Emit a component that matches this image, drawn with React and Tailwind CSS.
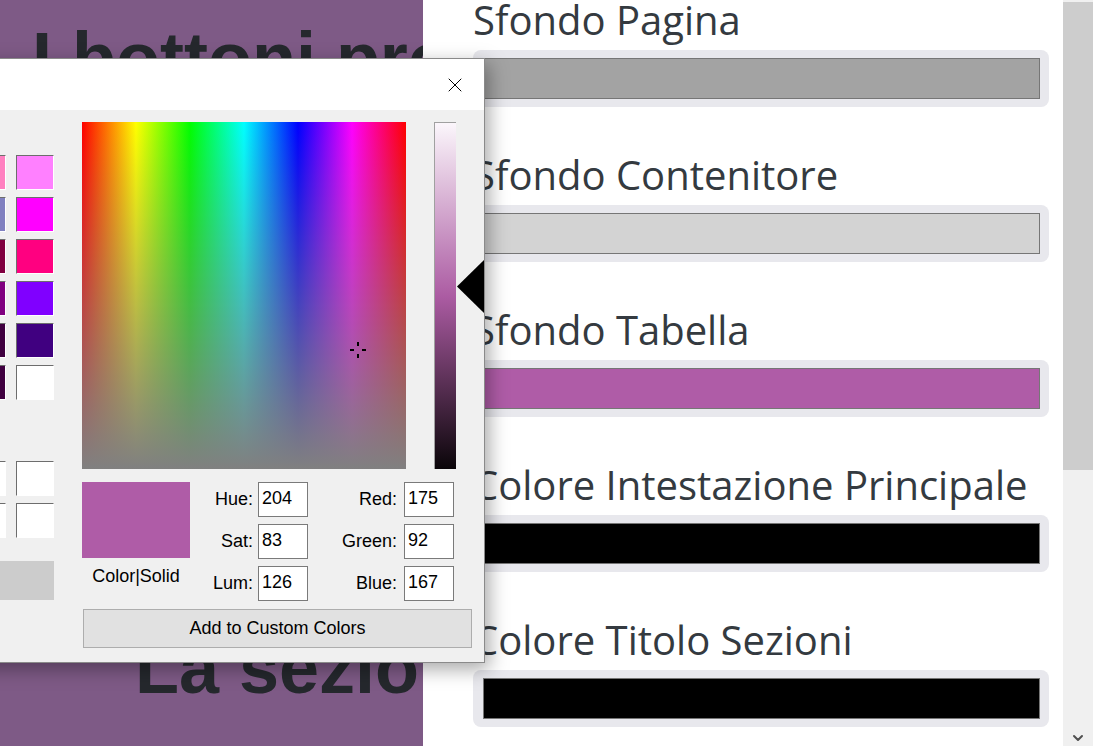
/**
 * Impostazioni colori — pannello campi colore con il selettore colori di Windows aperto sopra.
 */

import { X, ChevronDown } from 'lucide-react'

const BASIC_COLORS = [
  'bg-[#ff8080]', 'bg-[#ffff80]', 'bg-[#80ff80]', 'bg-[#00ff80]', 'bg-[#80ffff]', 'bg-[#0080ff]', 'bg-[#ff80c0]', 'bg-[#ff80ff]',
  'bg-[#ff0000]', 'bg-[#ffff00]', 'bg-[#80ff00]', 'bg-[#00ff40]', 'bg-[#00ffff]', 'bg-[#0080c0]', 'bg-[#8080c0]', 'bg-[#ff00ff]',
  'bg-[#804040]', 'bg-[#ff8040]', 'bg-[#00ff00]', 'bg-[#008080]', 'bg-[#004080]', 'bg-[#8080ff]', 'bg-[#800040]', 'bg-[#ff0080]',
  'bg-[#800000]', 'bg-[#ff8000]', 'bg-[#008000]', 'bg-[#008040]', 'bg-[#0000ff]', 'bg-[#0000a0]', 'bg-[#800080]', 'bg-[#8000ff]',
  'bg-[#400000]', 'bg-[#804000]', 'bg-[#004000]', 'bg-[#004040]', 'bg-[#000080]', 'bg-[#000040]', 'bg-[#400040]', 'bg-[#400080]',
  'bg-[#000000]', 'bg-[#808000]', 'bg-[#808040]', 'bg-[#808080]', 'bg-[#408080]', 'bg-[#c0c0c0]', 'bg-[#400040]', 'bg-[#ffffff]',
]

const FIELDS = [
  { label: 'Sfondo Pagina', swatch: 'bg-[#a3a3a3]' },
  { label: 'Sfondo Contenitore', swatch: 'bg-[#d3d3d3]' },
  { label: 'Sfondo Tabella', swatch: 'bg-[#af5ca7]' },
  { label: 'Colore Intestazione Principale', swatch: 'bg-black' },
  { label: 'Colore Titolo Sezioni', swatch: 'bg-black' },
]

function Swatch({ color }) {
  return (
    <div className={`h-[35px] w-[38px] border border-t-[#6d6d6d] border-l-[#6d6d6d] border-r-white border-b-white ${color}`} />
  )
}

function NumBox({ value }) {
  return (
    <div className="h-[35px] w-[50px] border border-[#7a7a7a] bg-white pl-[3px] pt-[6px] leading-[18px]">{value}</div>
  )
}

function ColorField({ label, swatch }) {
  return (
    <div className="mb-[48px]">
      <p className="whitespace-nowrap text-[40px] leading-[40px] text-[#343a40]">{label}</p>
      <div className="mt-[10px] w-[576px] rounded-lg bg-[#e8e8ed] py-[8px] pl-[10px] pr-[9px]">
        <div className={`h-[41px] border border-[#767676] ${swatch}`} />
      </div>
    </div>
  )
}

function ColorDialog() {
  return (
    <div className="absolute left-[-341px] top-[58px] flex h-[605px] w-[826px] flex-col border border-[#8a8a8a] font-['Liberation_Sans',Arial,sans-serif] text-[18px] text-black shadow-[4px_6px_18px_rgba(0,0,0,0.35)]">
      <div className="flex h-[51px] items-center justify-between bg-white pl-[10px] pr-[17px]">
        <span className="text-[15px]">Colore</span>
        <X size={24} strokeWidth={1} className="text-black" />
      </div>
      <div className="flex flex-1 bg-[#f0f0f0]">
        <div className="ml-[20px] w-[374px]">
          <div className="flex h-[45px] items-end pb-[4px] text-[15px]">Basic colors:</div>
          <div className="grid grid-cols-8 gap-x-[10px] gap-y-[7px]">
            {BASIC_COLORS.map((c, i) => <Swatch key={i} color={c} />)}
          </div>
          <div className="flex h-[61px] items-end pb-[6px] text-[15px]">Custom colors:</div>
          <div className="grid grid-cols-8 gap-x-[10px] gap-y-[7px]">
            {Array.from({ length: 16 }).map((_, i) => <Swatch key={i} color="bg-white" />)}
          </div>
          <div className="mt-[23px] flex h-[39px] items-center justify-center bg-[#cccccc] text-[#8d8d8d]">Define Custom Colors &gt;&gt;</div>
        </div>

        <div className="ml-[28px] flex w-[402px] flex-col">
          <div className="mt-[12px] flex">
            <div className="relative h-[347px] w-[324px] bg-[image:linear-gradient(to_bottom,transparent,#808080),linear-gradient(to_right,#ff0000,#ffff00,#00ff00,#00ffff,#0000ff,#ff00ff,#ff0000)]">
              <div className="absolute left-[275px] top-[220px] h-[4px] w-[2px] bg-black" />
              <div className="absolute left-[275px] top-[232px] h-[4px] w-[2px] bg-black" />
              <div className="absolute left-[268px] top-[227px] h-[2px] w-[4px] bg-black" />
              <div className="absolute left-[280px] top-[227px] h-[2px] w-[4px] bg-black" />
            </div>
            <div className="ml-[28px] h-[347px] w-[22px] border-l border-t border-[#a0a0a0] bg-[linear-gradient(to_bottom,#fbf6fb,#ac5ca3,#0a0509)]" />
            <svg className="ml-[1px] mt-[138px]" width="27" height="53" viewBox="0 0 27 53">
              <polygon points="0,26.5 27,0 27,53" fill="#000" />
            </svg>
          </div>

          <div className="mt-[13px] grid grid-cols-[108px_68px_50px_96px_50px] grid-rows-[35px_35px_35px] gap-y-[7px]">
            <div className="row-span-2 mb-[1px] bg-[#af5ca7]" />
            <div className="flex items-center justify-end pb-[1px] pr-[5px]">Hue:</div>
            <NumBox value="204" />
            <div className="flex items-center justify-end pb-[1px] pr-[7px]">Red:</div>
            <NumBox value="175" />
            <div className="flex items-center justify-end pb-[1px] pr-[5px]">Sat:</div>
            <NumBox value="83" />
            <div className="flex items-center justify-end pb-[1px] pr-[7px]">Green:</div>
            <NumBox value="92" />
            <div className="pt-[1px] text-center leading-[18px]">Color|Solid</div>
            <div className="flex items-center justify-end pb-[1px] pr-[5px]">Lum:</div>
            <NumBox value="126" />
            <div className="flex items-center justify-end pb-[1px] pr-[7px]">Blue:</div>
            <NumBox value="167" />
          </div>

          <button className="ml-[1px] mt-[8px] h-[39px] w-[389px] border border-[#adadad] bg-[#e1e1e1] text-[18px]">
            Add to Custom Colors
          </button>
        </div>
      </div>
    </div>
  )
}

export default function App() {
  return (
    <div className="relative flex h-[746px] w-[1111px] overflow-hidden bg-white">
      <div className="flex w-[423px] flex-col overflow-hidden bg-[#7e5a86] font-['Liberation_Sans',Arial,sans-serif] text-[72px] font-bold leading-none text-[#25282d]">
        <h1 className="whitespace-nowrap pl-[32px] pt-[22px]">I bottoni prodotti</h1>
        <h2 className="mt-auto mb-[42px] whitespace-nowrap pl-[135px]">La sezione</h2>
      </div>

      <div className="w-[640px] overflow-hidden pl-[50px] pr-[14px] font-['Open_Sans','Noto_Sans',sans-serif]">
        {FIELDS.map(f => <ColorField key={f.label} label={f.label} swatch={f.swatch} />)}
      </div>

      <div className="flex w-[30px] flex-col bg-[#f0f0f0]">
        <div className="mt-[2px] h-[468px] bg-[#cdcdcd]" />
        <div className="mt-auto flex h-[17px] items-center justify-center text-[#505050]">
          <ChevronDown size={16} strokeWidth={3} />
        </div>
      </div>
      <div className="flex-1 bg-white" />

      <ColorDialog />
    </div>
  )
}
